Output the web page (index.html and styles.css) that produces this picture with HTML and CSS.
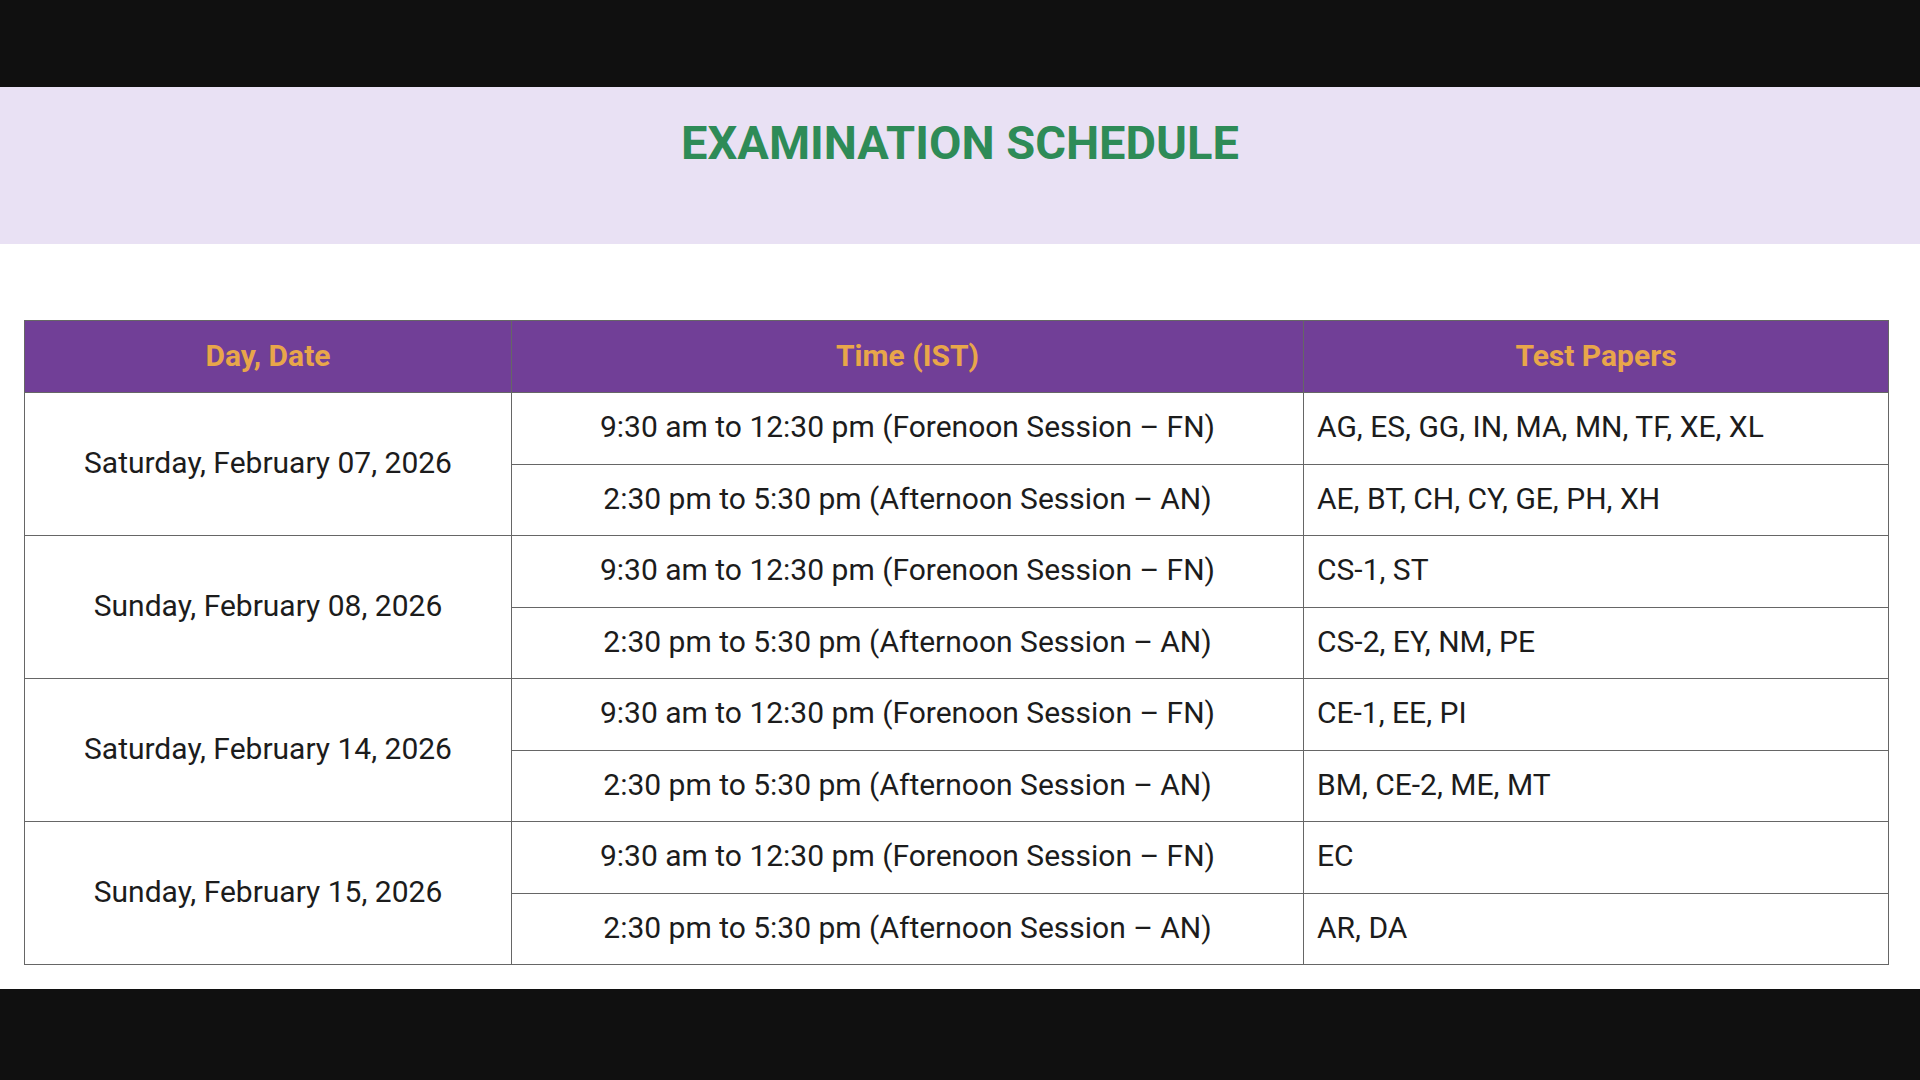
FILE: index.html
```html
<!DOCTYPE html>
<html lang="en">
<head>
<meta charset="utf-8">
<title>Examination Schedule</title>
<link rel="stylesheet" href="styles.css">
</head>
<body>
<div class="topbar"></div>
<header class="banner">
  <h1 class="title">EXAMINATION SCHEDULE</h1>
</header>
<main class="content">
  <table class="schedule">
    <colgroup>
      <col class="c1"><col class="c2"><col class="c3">
    </colgroup>
    <thead>
      <tr><th>Day, Date</th><th>Time (IST)</th><th>Test Papers</th></tr>
    </thead>
    <tbody>
      <tr><td rowspan="2" class="day">Saturday, February 07, 2026</td><td class="time">9:30 am to 12:30 pm (Forenoon Session – FN)</td><td class="papers">AG, ES, GG, IN, MA, MN, TF, XE, XL</td></tr>
      <tr><td class="time">2:30 pm to 5:30 pm (Afternoon Session – AN)</td><td class="papers">AE, BT, CH, CY, GE, PH, XH</td></tr>
      <tr><td rowspan="2" class="day">Sunday, February 08, 2026</td><td class="time">9:30 am to 12:30 pm (Forenoon Session – FN)</td><td class="papers">CS-1, ST</td></tr>
      <tr><td class="time">2:30 pm to 5:30 pm (Afternoon Session – AN)</td><td class="papers">CS-2, EY, NM, PE</td></tr>
      <tr><td rowspan="2" class="day">Saturday, February 14, 2026</td><td class="time">9:30 am to 12:30 pm (Forenoon Session – FN)</td><td class="papers">CE-1, EE, PI</td></tr>
      <tr><td class="time">2:30 pm to 5:30 pm (Afternoon Session – AN)</td><td class="papers">BM, CE-2, ME, MT</td></tr>
      <tr><td rowspan="2" class="day">Sunday, February 15, 2026</td><td class="time">9:30 am to 12:30 pm (Forenoon Session – FN)</td><td class="papers">EC</td></tr>
      <tr><td class="time">2:30 pm to 5:30 pm (Afternoon Session – AN)</td><td class="papers">AR, DA</td></tr>
    </tbody>
  </table>
</main>
<div class="bottombar"></div>
</body>
</html>
```
FILE: styles.css
```css
html, body {
  margin: 0;
  padding: 0;
  background: #101010;
  font-family: Roboto, "Liberation Sans", sans-serif;
}
.topbar {
  height: 87px;
  background: #101010;
}
.banner {
  height: 157px;
  background: #e9e1f4;
  box-sizing: border-box;
  padding-top: 28px;
}
.title {
  margin: 0;
  text-align: center;
  font-size: 47px;
  line-height: 56px;
  font-weight: 700;
  color: #2e8b57;
}
.content {
  background: #ffffff;
  height: 745px;
  box-sizing: border-box;
  padding: 76px 31px 0 24px;
}
.schedule {
  width: 100%;
  border-collapse: collapse;
  table-layout: fixed;
  font-size: 30px;
  line-height: 34px;
  color: #1c1c1c;
}
.c1 { width: 487px; }
.c2 { width: 792px; }
.schedule th, .schedule td {
  border: 1.5px solid #666666;
  padding: 0 13px 2px;
  height: 71.5px;
  box-sizing: border-box;
}
.schedule th {
  background: #713f97;
  color: #e8a64a;
  font-weight: 700;
  height: 72px;
  text-align: center;
}
.day, .time { text-align: center; }
.papers { text-align: left; }
.bottombar {
  height: 91px;
  background: #101010;
}
```
